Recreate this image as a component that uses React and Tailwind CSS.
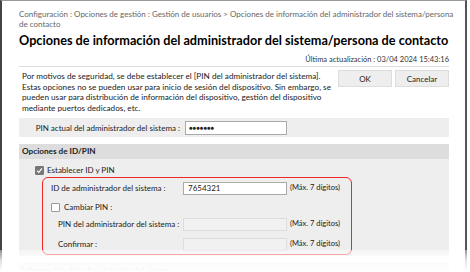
import React from "react";

function Check({ checked }) {
  return (
    <span
      className={
        "inline-flex h-[9px] w-[9px] shrink-0 items-center justify-center rounded-[1px] border " +
        (checked ? "border-[#777] bg-[#777]" : "border-[#999] bg-white")
      }
    >
      {checked && (
        <svg width="7" height="7" viewBox="0 0 8 8">
          <path d="M1.2 4.2 L3.2 6.2 L6.8 1.6" stroke="white" strokeWidth="1.4" fill="none" />
        </svg>
      )}
    </span>
  );
}

export default function App() {
  return (
    <div
      className="relative h-[272px] w-[470px] overflow-hidden bg-white text-[#222]"
      style={{ fontFamily: 'Lato, "Noto Sans", sans-serif' }}
    >
      <div className="h-[300px] w-[467px] border-t border-l-2 border-r-[2px] border-t-[#999] border-l-[#444] border-r-[#555] bg-white pl-[17px] pr-[16px] pt-[8px]">
        <div className="whitespace-nowrap text-[8px] leading-[10px] text-[#666]">
          Configuración : Opciones de gestión : Gestión de usuarios &gt; Opciones de información del administrador del sistema/persona
          <br />
          de contacto
        </div>
        <h1 className="mt-[3px] whitespace-nowrap text-[12.7px] font-bold leading-[16px] text-black">
          Opciones de información del administrador del sistema/persona de contacto
        </h1>
        <div className="mt-[7px] text-right text-[7.5px] leading-[10px] text-[#333]">
          Última actualización : 03/04 2024 15:43:16
        </div>
        <div className="mt-[1px] h-px bg-[#ddd]" />
        <div className="mt-[4px] flex items-start justify-between">
          <p className="whitespace-nowrap pl-[3px] text-[8.2px] leading-[10.5px] text-[#222]">
            Por motivos de seguridad, se debe establecer el [PIN del administrador del sistema].
            <br />
            Estas opciones no se pueden usar para inicio de sesión del dispositivo. Sin embargo, se
            <br />
            pueden usar para distribución de información del dispositivo, gestión del dispositivo
            <br />
            mediante puertos dedicados, etc.
          </p>
          <div className="-mt-[1px] flex gap-[3px]">
            <button className="h-[17px] w-[54px] border border-[#ddd] bg-[#eee] text-[8px] text-[#222]">OK</button>
            <button className="h-[17px] w-[54px] border border-[#ddd] bg-[#eee] text-[8px] text-[#222]">Cancelar</button>
          </div>
        </div>
        <div className="mt-[5px] flex h-[19px] items-center bg-[#eee]">
          <div className="w-[161px] whitespace-nowrap text-right text-[8px] text-[#222]">PIN actual del administrador del sistema :</div>
          <div className="ml-[5px] flex h-[14px] w-[102px] items-center border border-[#aaa] bg-white pl-[3px] text-[6px] leading-none">
            ●●●●●●●
          </div>
        </div>
        <div className="mt-[7px] flex h-[15px] items-center bg-[#ddd] pl-[3px] text-[8.2px] font-bold text-[#222]">
          Opciones de ID/PIN
        </div>
        <div className="bg-[#eee] pb-[1px] pt-[6px]">
          <div className="flex items-center gap-[3px] pl-[16px] text-[8px] leading-[11px]">
            <Check checked />
            <span>Establecer ID y PIN</span>
          </div>
          <div className="ml-[23px] mt-[1px] w-[310px] rounded-[6px] border-[1.5px] border-[#f0262b] pb-[3px] pl-[8px] pt-[3px]">
            <div className="flex h-[14px] items-center whitespace-nowrap text-[8px]">
              <span className="w-[132px]">ID de administrador del sistema :</span>
              <span className="flex h-[13px] w-[104px] items-center border border-[#aaa] bg-white pl-[4px] text-[8px]">7654321</span>
              <span className="ml-[3px] text-[7.5px]">(Máx. 7 dígitos)</span>
            </div>
            <div className="mt-[7px] flex items-center gap-[4px] text-[8px] leading-[11px]">
              <Check checked={false} />
              <span>Cambiar PIN :</span>
            </div>
            <div className="mt-[4px] flex h-[14px] items-center whitespace-nowrap pl-[7px] text-[8px]">
              <span className="w-[125px]">PIN del administrador del sistema :</span>
              <span className="h-[13px] w-[104px] border border-[#ddd] bg-[#f1f1f1]" />
              <span className="ml-[3px] text-[7.5px]">(Máx. 7 dígitos)</span>
            </div>
            <div className="mt-[6px] flex h-[14px] items-center whitespace-nowrap pl-[7px] text-[8px]">
              <span className="w-[125px]">Confirmar :</span>
              <span className="h-[13px] w-[104px] border border-[#ddd] bg-[#f1f1f1]" />
              <span className="ml-[3px] text-[7.5px]">(Máx. 7 dígitos)</span>
            </div>
          </div>
        </div>
        <div className="mt-[7px] flex h-[15px] items-center bg-[#ddd] pl-[3px] text-[8.2px] font-bold text-[#222]">
          Información del administrador del sistema
        </div>
      </div>
      <div className="pointer-events-none absolute bottom-0 left-0 h-[22px] w-full bg-gradient-to-b from-white/40 via-white/85 to-white" />
    </div>
  );
}
